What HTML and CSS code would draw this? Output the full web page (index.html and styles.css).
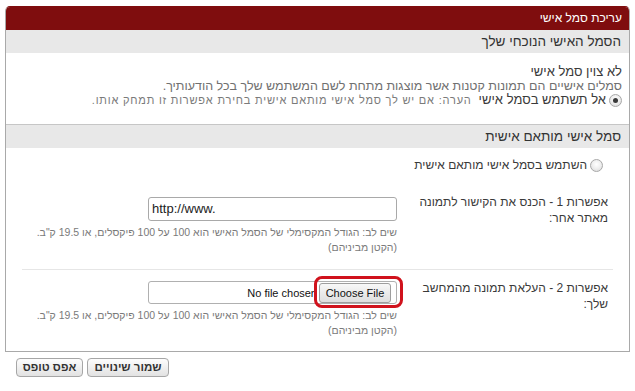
FILE: index.html
```html
<!DOCTYPE html>
<html lang="he" dir="rtl">
<head>
<meta charset="utf-8">
<title>עריכת סמל אישי</title>
<link rel="stylesheet" href="styles.css">
</head>
<body>
<div class="page">
  <div class="panel">
    <div class="panel-title">עריכת סמל אישי</div>
    <div class="section-head">הסמל האישי הנוכחי שלך</div>
    <div class="section-body s1">
      <div class="line strong">לא צוין סמל אישי</div>
      <div class="line muted">סמלים אישיים הם תמונות קטנות אשר מוצגות מתחת לשם המשתמש שלך בכל הודעותיך.</div>
      <div class="line radio-line"><span class="radio checked"></span><span>אל תשתמש בסמל אישי</span> <span class="note">הערה: אם יש לך סמל אישי מותאם אישית בחירת אפשרות זו תמחק אותו.</span></div>
    </div>
    <div class="section-head bordered">סמל אישי מותאם אישית</div>
    <div class="section-body s2">
      <div class="radio-line custom"><span class="radio"></span><span>השתמש בסמל אישי מותאם אישית</span></div>
      <div class="opt-row first">
        <div class="opt-label">אפשרות 1 - הכנס את הקישור לתמונה מאתר אחר:</div>
        <div class="opt-field">
          <div class="url-input">http://www.</div>
          <div class="hint">שים לב: הגודל המקסימלי של הסמל האישי הוא 100 על 100 פיקסלים, או 19.5 ק"ב.<br>(הקטן מביניהם)</div>
        </div>
      </div>
      <div class="opt-row">
        <div class="opt-label">אפשרות 2 - העלאת תמונה מהמחשב שלך:</div>
        <div class="opt-field">
          <div class="file-box">
            <span class="file-btn-wrap"><span class="file-btn">Choose File</span><span class="highlight"></span></span>
            <span class="file-name">No file chosen</span>
          </div>
          <div class="hint">שים לב: הגודל המקסימלי של הסמל האישי הוא 100 על 100 פיקסלים, או 19.5 ק"ב.<br>(הקטן מביניהם)</div>
        </div>
      </div>
    </div>
  </div>
  <div class="actions">
    <span class="btn btn-save">שמור שינויים</span>
    <span class="btn btn-reset">אפס טופס</span>
  </div>
</div>
</body>
</html>
```

FILE: styles.css
```css
html, body {
  margin: 0;
  padding: 0;
  background: #fff;
}
body {
  font-family: "Liberation Sans", Arial, sans-serif;
  font-size: 13px;
  color: #3a3a3a;
}
.page {
  padding: 6px 5px 0;
}
.panel {
  border: 1px solid #a9a9a9;
  border-top-color: #7f0d0e;
  border-radius: 5px 5px 0 0;
  overflow: hidden;
}
.panel-title {
  background: #7f0d0e;
  color: #fff;
  font-size: 12px;
  line-height: 23px;
  padding: 0 7px;
}
.section-head {
  background: #e8e8e8;
  color: #333;
  font-size: 13.5px;
  line-height: 23px;
  padding: 0 8px;
}
.section-head.bordered {
  border-top: 1px solid #c6c6c6;
}
.s1 {
  padding: 12px 7px 17px;
}
.line {
  line-height: 14px;
}
.strong {
  color: #3a3a3a;
}
.muted {
  color: #707070;
  font-size: 12.5px;
}
.radio-line {
  display: flex;
  align-items: center;
  gap: 3px;
  color: #3a3a3a;
}
.note {
  font-size: 11px;
  letter-spacing: 0.8px;
  color: #7a7a7a;
  margin-right: 4px;
}
.radio {
  width: 11px;
  height: 11px;
  border-radius: 50%;
  border: 1px solid #a8a8a8;
  background: radial-gradient(circle at 50% 40%, #ffffff 0%, #f0f0f0 45%, #d6d6d6 100%);
  box-sizing: content-box;
  flex: none;
  display: flex;
  align-items: center;
  justify-content: center;
}
.radio.checked::after {
  content: "";
  width: 5px;
  height: 5px;
  border-radius: 50%;
  background: #3a3a3a;
}
.s2 {
  font-size: 12px;
}
.radio-line.custom {
  padding: 10px 26px 12px 8px;
  line-height: 15px;
}
.opt-row {
  margin: 0 16px;
  padding: 12px 5px 14px 0;
  display: grid;
  grid-template-columns: 207px 1fr;
  column-gap: 4px;
}
.opt-row.first {
  border-bottom: 1px solid #e6e6e6;
}
.opt-row:not(.first) {
  padding-top: 11px;
  padding-bottom: 13px;
}
.opt-label {
  line-height: 16px;
  margin-top: -3px;
  color: #3a3a3a;
}
.opt-row:not(.first) .opt-label {
  margin-top: -1px;
}
.url-input {
  width: 249px;
  height: 24px;
  box-sizing: border-box;
  border: 1px solid #a9a9a9;
  border-radius: 3px;
  direction: ltr;
  text-align: left;
  padding: 0 3px;
  line-height: 22px;
  font-size: 13px;
  color: #222;
}
.hint {
  margin-top: 4px;
  font-size: 10.5px;
  line-height: 15px;
  color: #7a7a7a;
}
.file-box {
  width: 249px;
  height: 23px;
  box-sizing: border-box;
  border: 1px solid #b0b0b0;
  border-radius: 3px;
  display: flex;
  align-items: center;
  padding-right: 5px;
  gap: 2px;
}
.file-btn-wrap {
  position: relative;
  display: flex;
}
.file-btn {
  width: 72px;
  height: 20px;
  box-sizing: border-box;
  border: 1px solid #9e9e9e;
  border-radius: 3px;
  background: linear-gradient(#f8f8f8, #dedede);
  font-size: 11px;
  line-height: 18px;
  text-align: center;
  color: #111;
  direction: ltr;
}
.highlight {
  position: absolute;
  top: -7px;
  bottom: -5px;
  left: -5px;
  right: -12px;
  border: 3px solid #d0121c;
  border-radius: 8px;
}
.file-name {
  direction: ltr;
  font-size: 11px;
  color: #111;
}
.actions {
  display: flex;
  justify-content: flex-end;
  gap: 4px;
  padding-left: 11px;
  margin-top: 6px;
}
.btn {
  height: 19px;
  box-sizing: border-box;
  border: 1px solid #a6a6a6;
  border-radius: 4px;
  background: linear-gradient(#fdfdfd, #e2e2e2);
  font-size: 11.5px;
  font-weight: bold;
  line-height: 17px;
  text-align: center;
  color: #333;
}
.btn-save {
  width: 82px;
}
.btn-reset {
  width: 67px;
}
```
